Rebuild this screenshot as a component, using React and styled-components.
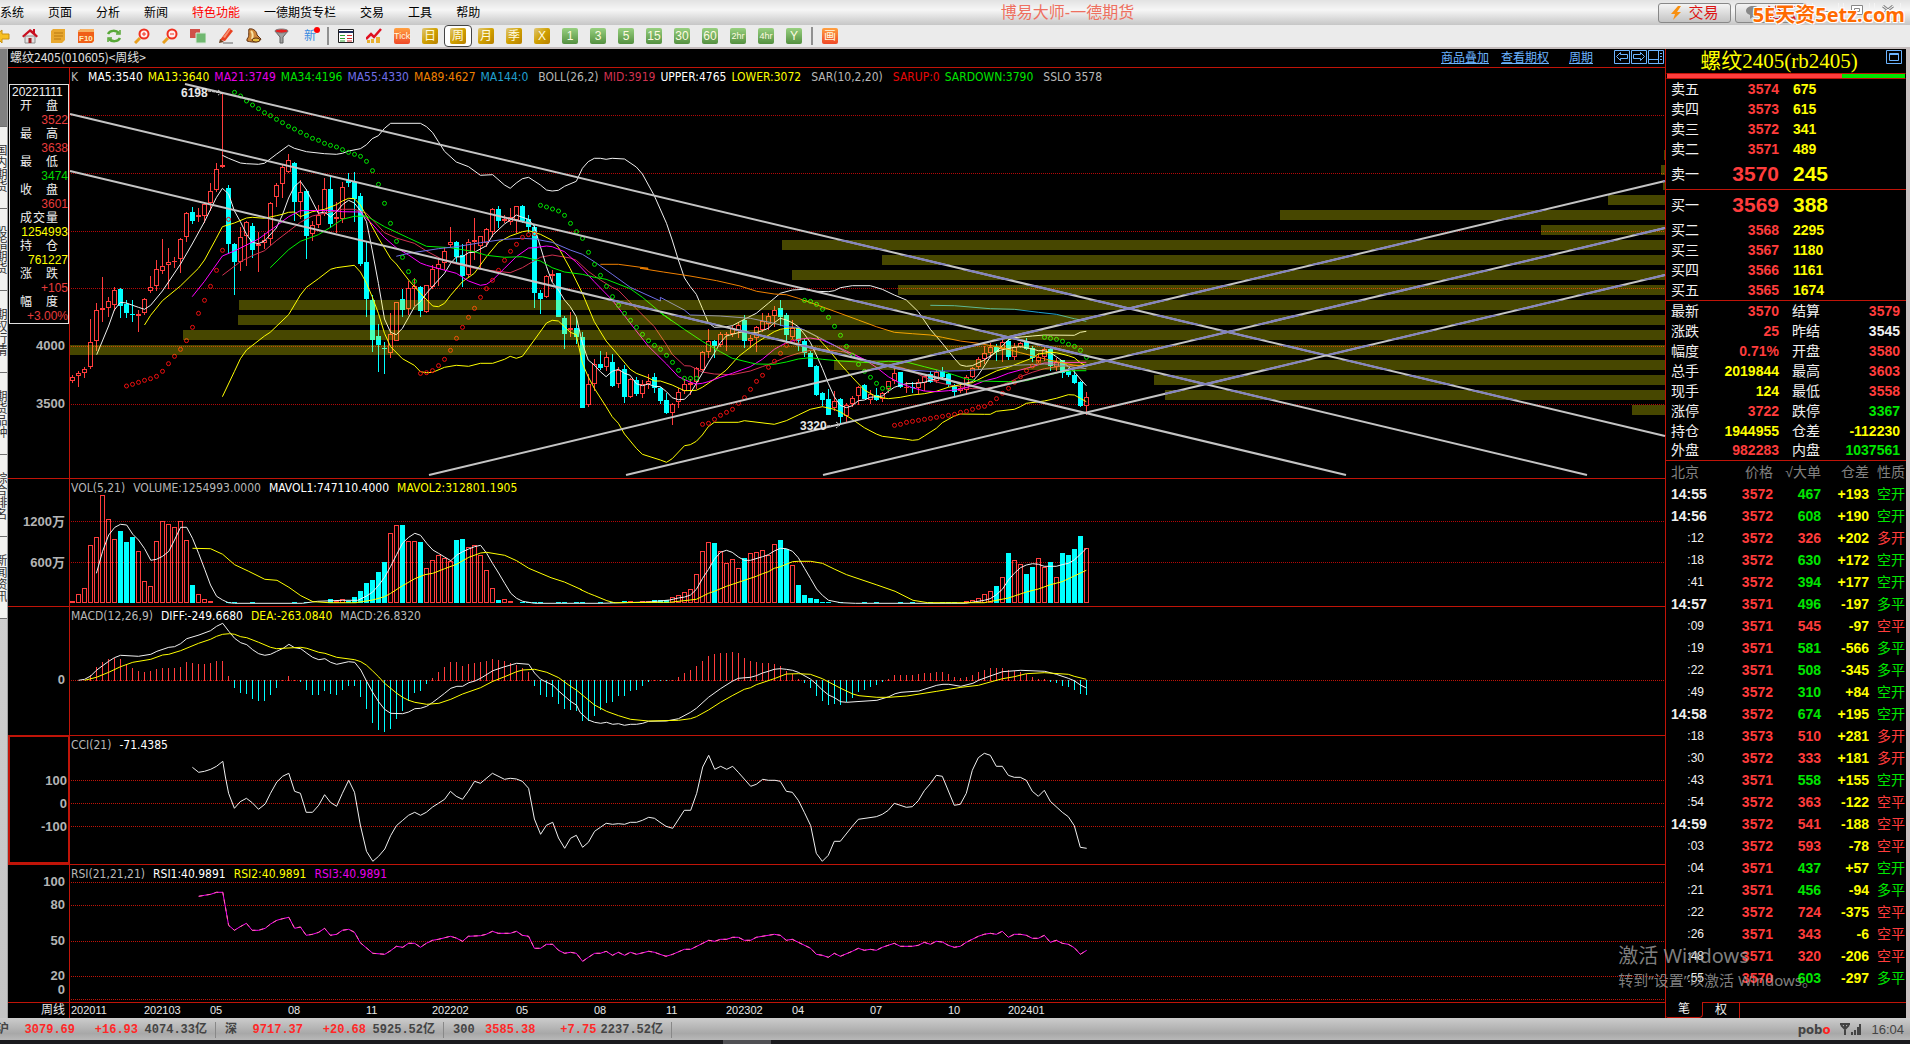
import React from "react";
import styled, { createGlobalStyle } from "styled-components";

const RED = "#ff3c3c";
const CYAN = "#00ffff";
const YELLOW = "#ffff00";
const GREEN = "#00e600";
const LINE = "#c01408";

const GlobalStyle = createGlobalStyle`
  * {
    box-sizing: border-box;
  }
  body {
    margin: 0;
    background-color: black;
    overflow: hidden;
    font-family: "Liberation Sans", "Noto Sans CJK SC", sans-serif;
    font-size: 12px;
  }
  button {
    font: inherit;
    padding: 0;
    border: none;
    background: none;
  }
`;

const Page = styled.div`
  position: relative;
  min-height: 100vh;
  display: flex;
  flex-direction: column;
  overflow: hidden;
`;

/* ---------- menu ---------- */

const MenuBar = styled.header`
  height: 25px;
  display: flex;
  align-items: center;
  justify-content: space-between;
  background: linear-gradient(#e2e2e2, #f6f6f6 40%, #c6c6c6);
`;

const MenuList = styled.nav`
  flex: 1;
  display: flex;
  gap: 24px;
`;

const MenuItem = styled.button`
  color: ${({ hot }) => (hot ? "#ff0000" : "#000000")};
  white-space: nowrap;
  line-height: 16px;
`;

const AppTitle = styled.h1`
  margin: 0;
  padding-left: 234px;
  font-size: 16px;
  line-height: 20px;
  font-weight: normal;
  color: #ee7060;
  white-space: nowrap;
`;

const MenuTools = styled.div`
  flex: 1;
  display: flex;
  justify-content: flex-end;
  gap: 4px;
  padding-right: 9px;
`;

const PillButton = styled.button`
  width: 73px;
  height: 20px;
  display: flex;
  align-items: center;
  justify-content: center;
  gap: 6px;
  border: 1px solid #888888;
  border-radius: 3px;
  background: linear-gradient(#f4f4f4, #c4c4c4);
  color: #dc1414;
  font-size: 15px;
  line-height: 16px;
`;

const WindowButton = styled.button`
  width: 27px;
  height: 18px;
  border: 1px solid #f4f4f4;
  border-top: none;
`;

const SiteMark = styled.div`
  position: absolute;
  top: 1px;
  right: 5px;
  font-family: "Open Sans", "Noto Sans CJK SC", sans-serif;
  font-weight: bold;
  font-size: 20px;
  line-height: 27px;
  color: #ff6a00;
  text-shadow: 1px 1px 0 white, -1px -1px 0 white, 1px -1px 0 white,
    -1px 1px 0 white;
`;

/* ---------- toolbar ---------- */

const Toolbar = styled.div`
  height: 24px;
  display: flex;
  margin-left: -12px;
  background-color: #ebebeb;
  border-bottom: 2px solid #c4bcbc;
`;

const ToolButton = styled.button`
  width: 28px;
  height: 22px;
  display: flex;
  align-items: center;
  justify-content: center;
  ${({ active }) =>
    active &&
    `
    background-color: white;
    border: 1px solid #444444;
    border-radius: 4px;
  `}
`;

const Divider = styled.span`
  width: 2px;
  height: 18px;
  margin: 2px 3px;
  background-color: #909090;
`;

const tileColors = {
  gold: "linear-gradient(135deg, #e0c878, #d0a000 50%, #b88000)",
  green: "linear-gradient(#98d080, #549040)",
  red: "linear-gradient(#ffa040, #f04828)"
};

const Tile = styled.span`
  width: 16px;
  height: 16px;
  border-radius: 2px;
  background: ${({ tone }) => tileColors[tone]};
  color: #fffbe0;
  font-size: ${({ small }) => (small ? "9px" : "12px")};
  line-height: 16px;
  text-align: center;
`;

const NewsMark = styled.span`
  position: relative;
  color: #3c8ce0;
  line-height: 16px;

  &::after {
    content: "";
    position: absolute;
    top: -1px;
    right: -4px;
    width: 6px;
    height: 6px;
    border-radius: 3px;
    background-color: #ff0000;
  }
`;

/* ---------- body ---------- */

const Body = styled.div`
  flex: 1;
  display: flex;
  border-right: 4px solid #c8c0c0;
`;

const SideTabs = styled.aside`
  width: 8px;
  overflow: hidden;
  background: linear-gradient(#dcdcdc, #c4c4c4);
  border-right: 1px solid #a0a0a0;
`;

const SideTab = styled.button`
  display: block;
  width: 7px;
  height: ${({ active }) => (active ? "78px" : "82px")};
  overflow: hidden;
  writing-mode: vertical-rl;
  background-color: ${({ active }) => (active ? "#808080" : "#f2f2f0")};
  border-bottom: 1px solid #707070;
  color: #333333;
  line-height: 14px;
`;

const Charts = styled.main`
  flex: 1;
  min-width: 0;
  border-right: 1px solid ${LINE};
`;

const ChartTitle = styled.div`
  height: 19px;
  display: flex;
  align-items: center;
  padding: 0 0 2px 2px;
  border-bottom: 1px solid ${LINE};
  color: #e0e0e0;
  font-family: "Noto Sans CJK SC", sans-serif;
  line-height: 16px;
`;

const ChartLinks = styled.nav`
  margin-left: auto;
  display: flex;
  align-items: center;

  a {
    color: #6cb4ff;
    margin-right: 12px;
  }
  a:last-of-type {
    margin: 0 21px 0 8px;
  }
  svg {
    margin-right: 1px;
  }
`;

const Panel = styled.section`
  display: flex;
  border-bottom: 1px solid ${LINE};
`;

const Gutter = styled.div`
  width: 62px;
  border-right: 1px solid ${LINE};
  ${({ focused }) =>
    focused &&
    `
    border: 2px solid ${LINE};
    border-top-width: 1px;
  `}

  svg {
    display: block;
    overflow: visible;
  }
`;

const Plot = styled.div`
  flex: 1;
  min-width: 0;

  svg {
    display: block;
    width: 100%;
    overflow: visible;
  }
`;

const Legend = styled.div`
  height: 17px;
  padding: 2px 0 0 1px;
  display: flex;
  gap: ${({ loose }) => (loose ? "8px" : "5px")};
  font-family: "DejaVu Sans Condensed", "DejaVu Sans", sans-serif;
  font-size: 12px;
  line-height: 15px;
  white-space: nowrap;
`;

const LegendItem = styled.span`
  color: ${({ tint }) => tint};
  padding-left: ${({ lead }) => (lead ? "5px" : "0")};
`;

const DataBox = styled.dl`
  width: 60px;
  margin: 16px 0 0 1px;
  border: 1px solid #e0e0e0;
  line-height: 14px;
  color: #f0f0f0;

  dt {
    display: flex;
    justify-content: space-between;
    width: 38px;
    height: 14px;
    margin: 0 auto;
  }
  dd {
    height: 14px;
    margin: 0;
    text-align: right;
  }
`;

const DataDate = styled.div`
  height: 14px;
  padding-left: 2px;
`;

const DataValue = styled.dd`
  color: ${({ tint }) => tint};
`;

const AxisRow = styled.div`
  display: flex;
  height: 15px;
  color: #e8e8e8;
`;

const AxisName = styled.div`
  width: 62px;
  padding-right: 4px;
  border-right: 1px solid ${LINE};
  text-align: right;
  line-height: 14px;
`;

/* ---------- quote ---------- */

const Quote = styled.aside`
  width: 240px;
  font-size: 14px;
  color: #f0f0f0;
  display: flex;
  flex-direction: column;
`;

const QuoteHead = styled.div`
  height: 24px;
  display: grid;
  grid-template-columns: 6px 1fr 20px;
  align-items: center;

  svg {
    align-self: start;
    margin-top: 1px;
  }
`;

const QuoteName = styled.h2`
  margin: 0;
  grid-column: 2;
  color: ${YELLOW};
  font-family: "Liberation Serif", "Noto Sans CJK SC", serif;
  font-size: 21px;
  font-weight: normal;
  line-height: 24px;
  text-align: center;
  white-space: nowrap;
`;

const RatioBar = styled.div`
  height: 6px;
  display: flex;
  border: 1px solid ${LINE};
  border-left-color: black;
  border-right-color: black;
`;

const RatioPart = styled.span`
  flex: ${({ share }) => share};
  background-color: ${({ tint }) => tint};
`;

const Book = styled.table`
  width: 100%;
  border-collapse: collapse;
  table-layout: fixed;
  border-bottom: 1px solid ${LINE};

  th {
    width: 34px;
    padding: 0 0 0 5px;
    font-weight: normal;
    text-align: left;
    white-space: nowrap;
  }
  td {
    padding: 0;
    font-weight: bold;
  }
`;

const BookRow = styled.tr`
  height: ${({ big }) => (big ? "30px" : "20px")};
  line-height: 20px;

  td {
    font-size: ${({ big }) => (big ? "21px" : "14px")};
    color: ${YELLOW};
    padding-left: 14px;
  }
  td:first-of-type {
    width: 79px;
    color: ${RED};
    text-align: right;
    padding-left: 0;
  }
`;

const Facts = styled.table`
  width: 100%;
  border-collapse: collapse;
  table-layout: fixed;
  border-bottom: 1px solid ${LINE};

  tr {
    height: 20px;
    line-height: 18px;
  }
  th {
    width: 34px;
    padding: 0 0 0 5px;
    font-weight: normal;
    text-align: left;
    white-space: nowrap;
  }
  th:nth-of-type(2) {
    width: 48px;
    padding-left: 13px;
  }
`;

const FactValue = styled.td`
  width: ${({ last }) => (last ? "auto" : "79px")};
  padding: ${({ last }) => (last ? "0 6px 0 0" : "0")};
  color: ${({ tint }) => tint};
  font-weight: bold;
  text-align: right;
`;

const Ticks = styled.table`
  width: 100%;
  border-collapse: collapse;
  table-layout: fixed;

  tr {
    height: 22px;
    line-height: 20px;
  }
  th,
  td {
    padding: 0;
    text-align: right;
    white-space: nowrap;
  }
  th {
    color: #808080;
    font-weight: normal;
  }
  td {
    font-weight: bold;
  }
  th:first-child {
    text-align: left;
    padding-left: 5px;
  }
  th:last-child,
  td:last-child {
    font-weight: normal;
    padding-right: 1px;
  }
`;

const TimeCell = styled.td`
  && {
    text-align: ${({ second }) => (second ? "right" : "left")};
    padding: 0 1px 0 5px;
    font-weight: ${({ second }) => (second ? "normal" : "bold")};
    font-size: ${({ second }) => (second ? "12px" : "14px")};
  }
`;

const TintCell = styled.td`
  color: ${({ tint }) => tint};
`;

const QuoteTabs = styled.div`
  height: 16px;
  margin-top: auto;
  display: flex;
  border-top: 1px solid ${LINE};
  font-size: 12px;
`;

const QuoteTab = styled.button`
  width: 37px;
  height: 16px;
  margin-top: -1px;
  color: #f0f0f0;
  line-height: 15px;
  border-right: 1px solid ${LINE};
  ${({ active }) =>
    active &&
    `
    background-color: black;
    border-bottom: 1px solid ${LINE};
    border-radius: 0 0 4px 2px;
  `}
`;

/* ---------- status ---------- */

const StatusBar = styled.footer`
  height: 22px;
  display: flex;
  align-items: center;
  padding-top: 1px;
  background: linear-gradient(#cccccc, #a8a8a8 70%, #b8b8b8);
  color: #444444;
  font-family: "Liberation Mono", "Noto Sans CJK SC", monospace;
  font-weight: bold;
  line-height: 16px;
`;

const IndexGroup = styled.div`
  width: 228px;
  display: flex;
  justify-content: flex-end;
  white-space: nowrap;
  border-right: 1px solid #888888;
  padding-right: 8px;

  &:first-child {
    margin-left: -12px;
  }
`;

const IndexName = styled.span`
  flex: 1;
  padding-left: 9px;
`;

const IndexValue = styled.span`
  width: ${({ wide }) => (wide ? "69px" : "63px")};
  color: ${({ wide }) => (wide ? "#444444" : "#ff2828")};
  text-align: right;
`;

const StatusRight = styled.div`
  margin-left: auto;
  padding-right: 6px;
  display: flex;
  align-items: center;
  gap: 10px;
  font-family: "DejaVu Sans Condensed", "DejaVu Sans", sans-serif;
  font-size: 13px;

  em {
    font-style: normal;
    color: #ff2020;
  }
  time {
    font-family: "Liberation Sans", sans-serif;
    font-weight: normal;
    font-size: 13px;
  }
`;

const Taskbar = styled.div`
  height: 4px;
  padding-left: 723px;
  background-color: #1a1a1e;

  &::after {
    content: "";
    display: block;
    width: 48px;
    height: 4px;
    background-color: #505054;
  }
`;

const Activate = styled.div`
  position: absolute;
  right: 93px;
  bottom: 54px;
  color: rgba(170, 170, 170, 0.75);
  font-family: "Noto Sans", "Noto Sans CJK SC", sans-serif;
  font-size: 15px;
  line-height: 20px;
  white-space: nowrap;

  p {
    margin: 0;
  }
  p:first-child {
    font-size: 20px;
    line-height: 28px;
  }
`;

/* ---------- chart data ---------- */

// body top, body bottom, high, low, r = up / c = down; three units per pixel
const candlesA = `890 904 886 908 r,878 889 872 920 r,866 878 862 893 r,787 862 718 866 r,691 784 670 812 r,
684 691 592 727 r,664 683 650 712 r,630 676 620 693 r,628 678 624 714 c,672 698 660 714 c,701 706 660 725 c,
702 707 690 755 r,658 699 655 705 r,620 632 589 640 r,566 619 540 632 r,559 574 478 583 r,547 555 504 627 r,
543 547 530 565 r,476 537 473 578 r,400 472 396 487 r,396 422 380 432 c,406 411 384 427 r,371 409 367 428 r,
332 370 308 393 r,268 331 250 337 r,254 262 40 265 r,324 491 316 521 c,492 545 488 645 c,472 547 440 574 r,
427 467 422 557 r,438 509 428 533 c,493 497 455 575 r,480 489 460 508 r,370 477 365 494 r,316 350 308 382 r,
262 311 256 353 r,241 275 222 280 r,249 365 247 423 c,336 365 300 416 r,332 468 328 537 c,436 463 424 483 r,
404 434 375 445 r,328 401 295 408 r,328 432 292 443 c,412 418 366 460 r,322 418 305 430 r,301 309 280 320 c,
306 356 277 425 c,348 551 338 557 c,546 657 485 710 c,660 779 645 816 c,768 794 733 876 c,803 808 787 882 c,
763 820 700 834 r,667 782 667 782 r,657 690 627 710 c,625 688 602 704 r,619 628 593 678 r,621 692 618 710 c,
616 695 616 700 r,568 620 556 628 r,553 566 537 617 r,512 549 500 570 r,487 496 441 500 r,487 531 483 546 c,
525 588 492 622 c,487 586 477 590 r,481 486 415 541 r,468 497 468 567 r,448 489 445 500 r,388 457 385 470 r,
388 423 377 445 c,416 424 406 430 r,410 425 385 435 r,379 420 377 460 r,378 422 374 430 c,418 442 405 460 c,
441 638 435 684 c,640 657 630 702 c,589 652 586 655 r,583 587 570 605 r,580 710 578 712 c,714 761 708 806 c,
745 750 697 770 r,745 772 712 792 c,771 983 757 985 c,913 976 882 980 r,853 913 838 932 r,853 863 813 870 c,
832 861 816 872 r,846 917 823 920 c,870 912 862 925 r,867 950 856 968 c,898 952 893 955 r,900 942 892 948 c,
912 943 900 955 r,903 913 882 928 r,890 923 880 940 c,923 962 920 972 c,960 998 940 1002 c,972 1000 968 1035 r,
937 965 925 983 r,913 934 900 942 r,910 914 898 945 r`;
const candlesB = `565 607 560 627 r,517 570 513 573 r,482 517 447 535 r,484 499 480 535 c,463 496 456 502 r,462 466 456 513 r,
444 463 437 470 r,436 452 428 475 r,419 482 405 503 c,475 482 465 505 r,442 475 438 515 r,422 450 400 455 r,
407 432 400 450 r,391 409 378 442 r,384 411 360 437 c,405 464 400 493 c,443 472 420 478 r,443 482 440 513 c,
484 519 478 531 c,518 561 513 561 c,557 645 555 648 c,639 659 636 678 c,657 704 627 706 c,662 683 633 692 r,
656 711 653 736 c,676 709 670 725 r,653 672 648 680 r,620 648 617 676 r,616 657 613 658 c,643 661 630 672 r,
645 660 624 662 c,640 658 635 666 r,604 628 602 640 r,580 602 562 612 r,576 622 576 625 c,620 622 607 640 r,
622 625 605 640 c,605 625 597 642 r,589 610 587 632 r,583 605 573 610 c,576 604 570 610 r,573 590 561 596 c,
583 615 580 620 c,615 636 612 650 c,625 632 612 640 r,592 631 585 645 r,563 592 560 595 r,536 560 530 570 r,
520 537 497 553 r,502 519 490 535 r,500 517 493 543 c,485 508 478 546 r,484 530 478 540 c,500 530 490 540 r,
490 500 487 505 r,485 506 475 510 c,503 535 498 545 c,530 544 520 550 r,508 530 502 543 r,508 558 505 572 c,
545 562 535 574 r,541 578 540 593 c,572 586 565 592 c,584 609 571 612 c,606 678 604 681 c,650 677 636 705 r`;

function readCandles(text, offset) {
  return text.split(",").map(row => {
    const [top, bottom, high, low, side] = row.trim().split(" ");
    return {
      top: Math.round(top / 3) + offset,
      bottom: Math.round(bottom / 3) + offset,
      high: Math.round(high / 3) + offset,
      low: Math.round(low / 3) + offset,
      up: side === "r"
    };
  });
}

const candles = [...readCandles(candlesA, -5), ...readCandles(candlesB, 95)];

// every series comes in two halves, each with its own origin and x scale
function trace(dx, sx, dy, text) {
  return text
    .trim()
    .split(/\s+/)
    .map(p => {
      const [x, y] = p.split(",");
      return `${(x / sx + dx).toFixed(1)},${(y / 3 + dy).toFixed(1)}`;
    })
    .join(" ");
}

const main = (a, b) =>
  [a && trace(-10, 2.45, -5, a), b && trace(570, 3, 95, b)].filter(Boolean).join(" ");
const lower = (dy, a, b) =>
  trace(-70, 2.6133, dy, a) + " " + trace(510, 2.9037, dy, b);
const osc = (dy, a, b) => trace(-70, 2.24, dy, a) + " " + trace(590, 3, dy, b);

const mainLines = [
  ["#d23250", main(
    "398,586 442,545 471,527 501,512 530,482 560,454 589,427 618,408 663,396 692,388 721,388 751,400 795,458 824,474 868,490 898,513 942,542 971,552 1015,565 1045,570 1103,578 1133,563 1148,552 1177,532 1206,525 1250,534 1265,541 1294,574 1324,600 1353,622 1368,631 1412,686 1456,740 1486,794 1500,823 1530,857",
    "151,558 187,576 223,582 277,584 331,573 367,560 403,547 439,531 475,520 511,511 547,508 601,514 637,520 673,540 709,549 745,558 781,562 817,573 853,592 889,606 925,614 961,620 997,626 1033,626 1069,620 1105,608 1141,590 1177,577 1213,566 1267,558 1339,556")],
  ["#f0f0f0", main(
    "398,226 413,235 442,249 457,251 486,253 501,250 530,223 560,196 574,205 604,215 648,221 677,223 692,220 707,213 736,206 751,194 765,176 780,167 795,145 810,130 883,130 898,140 913,158 927,185 942,214 971,246 1001,260 1030,286 1060,284 1089,315 1103,325 1118,309 1133,296 1148,292 1177,315 1192,330 1206,333 1221,331 1236,319 1265,304 1280,265 1294,245 1309,235 1324,235 1338,238 1353,235 1383,237 1412,261 1427,282 1456,347 1486,430 1500,480 1515,540 1530,594",
    "151,320 169,343 187,385 205,428 223,442 259,440 277,437 313,418 349,400 385,370 421,340 457,330 493,328 529,334 565,335 583,332 601,323 637,317 691,317 727,328 763,345 799,360 835,395 871,448 907,490 943,535 961,555 979,559 997,557 1033,540 1069,515 1105,480 1123,473 1177,468 1213,465 1303,466 1321,457 1339,454")],
  [YELLOW, main(
    "398,950 427,875 442,836 457,810 501,768 515,757 560,704 589,645 604,622 633,596 663,568 677,563 721,556 736,576 751,610 765,650 780,700 795,760 810,800 839,836 868,856 883,875 898,878 913,877 942,862 971,856 1001,859 1030,850 1060,850 1089,838 1103,829 1118,835 1133,829 1162,780 1192,729 1206,721 1221,723 1236,740 1250,757 1265,764 1280,850 1294,890 1309,925 1338,980 1353,1010 1368,1030 1383,1062 1412,1105 1427,1123 1471,1140 1486,1147 1500,1136 1530,1097",
    "151,794 169,784 187,765 205,740 223,727 295,727 313,722 403,733 439,722 475,705 511,688 547,680 583,688 601,696 637,718 673,743 709,762 727,769 799,778 817,781 835,779 853,768 889,745 907,728 943,708 961,702 1033,703 1051,703 1069,694 1123,688 1141,680 1159,670 1213,663 1249,655 1285,644 1303,645 1321,655 1339,665")],
  ["#f0f0f0", main(
    "90,824 119,738 133,690 148,667 163,669 178,676 192,682 207,688 222,676 251,633 295,553 324,492 354,425 383,353 398,325 413,342 427,392 442,425 457,463 471,487 486,491 501,483 530,444 545,405 560,354 574,320 589,304 604,330 633,400 648,396 663,411 677,396 692,374 707,361 721,369 736,392 751,425 765,510 780,610 795,717 810,757 824,764 839,745 854,712 868,681 883,665 898,640 913,619 942,580 957,550 971,531 986,530 1001,518 1015,517 1045,497 1060,465 1089,432 1103,420 1118,405 1133,412 1148,418 1162,440 1177,500 1192,560 1206,607 1221,630 1236,660 1250,680 1265,710 1280,790 1294,840 1309,855 1324,875 1338,890 1353,874 1368,868 1383,880 1397,886 1412,911 1427,917 1441,912 1456,919 1471,920 1486,935 1500,953 1515,959 1530,958",
    "151,640 169,610 187,580 205,548 223,520 241,488 259,468 277,463 295,458 313,455 331,459 349,458 367,452 385,445 403,428 421,415 439,420 457,428 475,440 493,462 511,487 529,525 547,565 565,610 583,650 601,676 619,683 637,677 655,662 673,660 691,652 709,650 727,648 745,634 763,622 781,616 799,611 835,610 853,607 871,601 889,596 907,593 925,598 943,606 961,612 979,609 997,605 1015,585 1033,558 1051,530 1069,515 1087,509 1123,502 1141,500 1159,503 1177,507 1195,512 1213,512 1231,518 1249,530 1267,543 1285,560 1303,575 1321,597 1339,617")],
  [YELLOW, main(
    "207,735 222,706 251,662 295,618 339,565 354,540 383,475 398,440 427,429 457,414 471,412 501,415 530,407 545,403 560,397 574,396 589,410 618,395 648,388 677,374 692,363 707,355 721,356 736,375 751,408 765,440 780,474 810,535 824,552 854,600 883,640 913,678 927,680 942,670 957,646 986,605 1015,580 1045,530 1074,487 1103,468 1133,455 1148,452 1177,463 1206,481 1221,502 1250,566 1280,640 1309,725 1338,783 1368,826 1397,868 1412,880 1441,893 1456,903 1471,903 1500,915 1530,932",
    "169,631 187,622 223,598 259,570 295,530 313,516 349,488 367,477 403,455 421,448 457,443 475,445 493,450 529,469 565,508 601,552 637,592 673,630 709,650 745,656 781,652 817,645 853,641 889,634 925,622 961,614 997,608 1033,590 1069,573 1105,562 1141,548 1177,534 1195,522 1231,517 1249,518 1285,527 1303,533 1321,548 1339,558")],
  ["#ff00ff", main(
    "324,650 354,604 398,528 427,513 457,495 486,477 530,438 560,410 589,392 663,391 692,395 736,396 765,432 795,473 824,503 854,525 883,549 898,556 971,580 1001,603 1030,616 1045,613 1060,600 1089,565 1118,530 1148,504 1162,503 1192,498 1206,500 1236,515 1265,547 1309,605 1353,660 1383,707 1412,753 1441,798 1486,852 1515,890 1545,907",
    "169,612 187,610 205,605 241,592 277,580 331,560 367,538 403,508 439,488 475,478 511,474 547,480 565,488 619,513 673,538 709,562 745,590 781,610 817,623 853,633 889,635 925,632 961,628 997,617 1033,603 1069,594 1105,580 1141,570 1177,560 1213,549 1267,548 1339,547")],
  ["#00f000", main(
    "515,563 560,509 589,484 633,464 663,442 692,418 721,409 751,408 795,440 854,474 898,499 957,503 1015,515 1045,526 1089,532 1133,530 1177,543 1206,563 1236,576 1280,583 1309,592 1338,598 1397,626 1427,652 1471,697 1500,723",
    "61,398 133,448 187,484 241,515 277,535 331,548 349,552 403,553 439,546 475,537 511,533 547,538 601,543 691,548 745,544 799,546 853,560 907,574 943,585 979,597 1015,603 1105,605 1159,602 1213,588 1267,575 1303,572 1339,572")],
  ["#7070e8", main(
    "824,529 854,520 927,506 971,500 1030,488 1089,478 1133,475 1162,477 1206,487 1250,510 1280,523 1309,545 1353,583 1397,622 1471,663",
    "61,352 133,390 151,405 241,408 331,415 403,430 439,440 475,442 529,468 583,496 637,528 691,545 745,558 799,570 871,574 979,572 1069,564 1123,556 1213,552 1267,556 1303,562 1339,566")],
  ["#f08000", main(
    "1324,553 1368,553 1441,565",
    "0,265 70,276 150,288 230,302 300,318 350,334 403,342 439,344 475,355 529,374 600,400 655,420 709,440 763,457 817,461 871,465 907,472 961,483 1015,490 1087,503 1141,518 1195,532 1249,545 1300,555 1339,560")],
  ["#20a0d0", main(null,
    "871,376 943,377 1051,386 1123,388 1195,397 1249,403 1303,416 1339,424")]
];

// first bar, offset, colour, values
const sarRuns = [
  [27, -85, "#00e600", [277, 288, 303, 315, 326, 338, 347, 358, 368, 379, 387, 397, 406, 415, 421, 430, 436, 441, 449, 457, 463, 469, 484, 512, 553, 610, 670, 724, 772, 815, 844]],
  [9, -5, "#f01010", [918, 913, 907, 901, 896, 889, 874, 851, 829, 808, 782, 742, 700, 661, 619, 571, 511, 418]],
  [58, -5, "#f01010", [880, 878, 872, 857, 838, 811, 775, 742, 712, 685, 652, 626, 601, 571, 541, 514, 493, 472, 464, 461]],
  [78, -5, "#00e600", [376, 381, 387, 393, 406, 430, 455, 475, 517, 553, 586, 619, 650, 676, 700, 721, 742, 763, 782, 796, 808, 826, 847, 871, 895, 895, 895]],
  [105, 95, "#f01010", [733, 730, 718, 706, 697, 688, 670, 653, 628, 604, 586, 562, 544, 520, 496, 484, 484]],
  [122, 95, "#00e600", [361, 364, 373, 388, 412, 439, 466, 499, 526, 553, 574, 592, 610, 625, 625]],
  [137, 95, "#f01010", [736, 733, 727, 724, 721, 718, 715, 712, 709, 706, 703, 697, 694, 688, 682, 679, 670, 656, 640, 625, 607, 590, 572, 558, 547]],
  [162, 95, "#00e600", [472, 475, 478, 484, 493, 499, 511, 532]]
];

// left edges, one bar every 15px
const profile = [1594, 1591, 1593, 1538, 1210, 1471, 712, 812, 722, 828, 169, 168, 113, 0, 764, 1084, 1095, 1562];

const trends = [
  [115, -1, 1595, 351],
  [0, 29, 1517, 390],
  [0, 86, 1276, 390],
  [359, 390, 1595, 96],
  [556, 390, 1595, 143],
  [753, 390, 1595, 190]
];

const flat = n => Array(n).fill(396);

const volumes = [
  393, 373, 355, 226, 202, 76, 148, 208, 183, 217, 202, 244, 334, 349, 214, 154, 163, 172, 154, 211, 346, 373, 388, 393,
  ...flat(19), 387, 394, 388, 393, 381, 363, 339, 330, 306, 276, 190, 166, 165, 213, 213, 216, 295, 271, 256, 264, 274,
  210, 207, 231, 226, 256, 300, 355, 390, 388, 393, ...flat(18), 394, 393, 396, 393, 393, 390, 390, 390, 381, 376, 366, 358, 313, 243, 217, 219, 243,
  280, 268, 295, 264, 249, 246, 240, 256, 223, 210, 237, 286, 345, 375, 384, 387, ...flat(24), 393, 390, 384, 373,
  363, 348, 321, 249, 271, 283, 312, 291, 265, 291, 276, 322, 249, 255, 237, 198, 234
];

const volLines = [
  ["#f0f0f0", lower(-26,
    "252,310 268,244 284,195 300,172 315,163 331,165 347,193 362,210 378,236 394,271 409,268 425,259 441,244 456,210 472,172 488,172 503,205 519,250 535,298 550,345 566,379 582,390 597,398 613,400 790,400 830,394 895,391 935,391 958,378 974,366 990,345 1005,322 1021,289 1037,253 1052,219 1068,202 1084,190 1099,196 1115,220 1131,240 1146,250 1162,261 1178,272 1193,256 1209,245 1225,237 1240,230 1256,226 1272,250 1287,280 1303,309 1319,340 1335,370 1350,385 1366,394 1397,400",
    "60,400 200,396 260,390 286,384 304,381 321,375 338,358 356,325 373,298 390,268 408,247 425,241 442,247 460,261 477,271 495,271 530,260 547,254 564,243 582,235 599,236 617,244 634,263 652,295 669,325 687,357 704,376 722,391 757,398 800,400 1120,400 1174,391 1191,386 1209,374 1227,357 1244,330 1261,310 1279,293 1296,285 1314,281 1331,283 1348,289 1383,289 1400,284 1418,280 1435,270 1453,253 1470,235")],
  [YELLOW, lower(-26,
    "503,235 550,236 582,253 613,284 650,304 692,328 724,331 755,352 786,377 818,395 860,398 930,398 974,390 1005,380 1021,370 1052,347 1084,326 1110,314 1131,310 1162,296 1193,283 1225,262 1256,249 1272,247 1319,256 1350,272 1382,295 1440,323 1475,336 1520,359",
    "0,358 25,370 43,377 78,392 100,398 260,397 338,388 373,370 390,364 425,349 512,319 530,311 547,305 564,295 582,290 617,275 634,274 670,274 704,280 740,298 774,314 860,344 915,364 967,391 1010,398 1174,398 1244,384 1296,366 1331,357 1366,344 1400,335 1435,318 1470,301")]
];

// starts at the fourth bar, 631 is the zero line
const macdBars = [
  616, 592, 576, 568, 564, 568, 585, 595, 604, 606, 604, 598, 595, 595, 594, 592, 577, 580, 582, 582, 580, 574, 574, 618,
  654, 669, 672, 687, 693, 693, 675, 654, 630, 618, 631, 635, 659, 675, 675, 663, 672, 675, 659, 648, 648, 681, 717, 759,
  780, 786, 777, 747, 723, 693, 669, 663, 642, 624, 606, 592, 577, 577, 588, 582, 580, 577, 574, 568, 571, 574, 580, 585,
  595, 606, 648, 675, 681, 681, 702, 717, 720, 723, 753, 752, 738, 720, 699, 696, 678, 678, 663, 660, 648, 636, 629, 634,
  634, 629, 621, 609, 600, 588, 573, 558, 552, 549, 549, 546, 549, 564, 573, 576, 579, 579, 582, 588, 603, 612, 627, 639,
  654, 678, 693, 705, 702, 705, 696, 684, 666, 660, 651, 645, 636, 627, 615, 615, 615, 615, 612, 609, 609, 606, 606, 612,
  621, 624, 621, 615, 606, 600, 594, 594, 594, 600, 603, 606, 612, 621, 627, 627, 636, 639, 648, 651, 660, 672, 675
];

const macdLines = [
  ["#f0f0f0", lower(-154,
    "205,631 221,628 237,618 252,601 268,587 284,574 299,563 315,556 362,559 394,553 410,544 441,532 456,530 472,521 488,506 520,495 550,482 566,469 582,460 598,484 613,505 629,518 645,524 660,539 676,551 692,556 707,553 723,544 740,535 755,523 770,533 786,536 802,550 817,562 833,569 849,566 864,577 880,583 911,575 927,577 943,600 958,634 974,667 990,696 1005,718 1021,730 1052,731 1068,726 1084,716 1099,715 1115,709 1131,697 1147,683 1162,670 1178,655 1194,649 1209,649 1225,638 1241,633 1256,625 1288,602 1319,590 1350,580 1382,583 1397,609 1413,628 1429,637 1444,645 1460,663 1491,694 1507,706",
    "0,727 25,750 42,757 60,760 77,757 95,763 112,761 129,766 147,763 164,763 182,760 199,754 251,753 286,746 321,727 338,715 373,682 408,656 442,634 460,625 495,622 512,617 530,609 547,604 564,598 582,596 599,598 617,601 634,607 669,627 687,643 704,660 722,675 739,683 757,695 774,697 862,691 897,680 915,671 932,667 984,663 1036,646 1054,643 1071,643 1106,649 1141,640 1157,631 1191,618 1227,605 1280,601 1350,604 1383,613 1418,625 1435,632 1453,645 1470,654")],
  [YELLOW, lower(-154,
    "221,631 252,622 284,607 315,590 347,577 394,568 425,555 441,553 472,542 519,520 550,508 566,499 582,493 600,491 613,493 629,500 645,503 676,517 707,532 723,536 739,535 786,532 802,535 833,547 849,550 880,562 927,569 943,575 958,586 974,603 990,621 1005,640 1037,670 1052,682 1068,691 1084,697 1115,703 1147,700 1178,688 1209,672 1256,653 1288,634 1319,620 1350,605 1366,600 1397,598 1429,607 1460,623 1491,649 1507,661",
    "0,669 42,705 77,724 112,737 147,748 199,753 286,751 321,746 338,740 373,720 408,697 442,677 477,658 495,653 512,644 564,626 599,612 634,611 669,613 704,626 757,655 792,672 810,677 862,682 897,682 949,678 1036,664 1106,652 1157,646 1191,636 1227,626 1261,620 1296,611 1348,608 1418,613 1435,619 1470,628")]
];

const cciLine = osc(-23,
  "431,112 445,127 458,124 472,118 485,109 499,94 505,141 512,190 525,235 538,215 552,205 565,218 579,238 594,222 606,190 620,156 633,139 647,130 660,184 673,190 686,247 700,247 714,226 727,194 740,217 754,229 767,190 781,151 794,187 807,285 821,364 835,394 848,379 862,357 875,317 888,287 902,271 915,256 929,247 942,256 955,247 969,231 982,220 996,208 1009,184 1022,199 1036,208 1049,184 1063,154 1076,160 1103,130 1130,148 1143,145 1157,147 1170,154 1184,175 1197,267 1211,313 1224,286 1238,277 1251,324 1265,355 1278,325 1291,316 1305,352 1318,337 1332,304 1345,292 1358,280 1372,283 1385,281 1399,283 1412,277 1426,277 1439,271 1453,262 1466,265",
  "0,277 18,289 38,295 73,241 92,241 110,190 128,111 146,76 164,118 182,109 200,118 218,109 235,127 272,169 289,163 308,148 325,151 345,151 361,154 379,184 397,187 415,211 433,247 452,287 469,370 487,394 505,376 523,334 541,334 577,289 595,268 649,260 667,253 685,241 703,220 739,232 757,230 775,212 793,182 811,161 829,136 847,139 883,226 901,223 919,190 937,121 955,83 973,70 991,76 1009,109 1027,109 1045,136 1063,142 1081,142 1099,151 1117,184 1135,199 1153,181 1171,214 1207,247 1225,260 1243,287 1261,352 1280,355");

const rsiLine = osc(-152,
  "445,499 458,496 472,493 485,487 499,487 512,586 525,601 538,590 552,580 565,601 579,601 594,595 606,582 620,571 633,566 647,562 660,595 673,591 686,616 700,613 714,607 727,595 740,616 754,613 767,601 781,598 794,607 807,638 835,670 862,673 875,662 888,649 902,652 915,640 929,640 942,652 955,640 969,631 982,628 1009,619 1022,624 1036,634 1049,619 1076,617 1089,613 1103,604 1116,610 1143,610 1157,604 1170,616 1184,619 1197,655 1211,655 1224,643 1238,643 1251,661 1265,670 1278,667 1291,670 1305,694 1318,682 1332,670 1345,670 1358,664 1372,676 1385,667 1399,676 1412,667 1426,673 1453,664 1466,667",
  "0,673 18,679 38,673 73,658 92,658 128,640 146,631 164,634 182,628 200,628 218,622 235,622 253,631 272,631 289,622 343,613 361,616 379,631 397,628 415,637 452,655 469,673 487,676 505,682 523,670 541,679 577,664 595,655 613,661 631,658 649,661 667,652 703,640 721,649 757,649 775,646 793,637 811,643 829,634 847,636 865,646 883,652 901,649 919,637 955,619 973,613 991,610 1009,613 1027,604 1045,622 1063,613 1081,613 1099,616 1117,625 1135,625 1153,616 1171,637 1189,631 1207,640 1225,643 1243,653 1261,673 1280,661");

const dates = [
  [1, "202011"], [74, "202103"], [140, "05"], [218, "08"], [296, "11"], [362, "202202"], [446, "05"],
  [524, "08"], [596, "11"], [656, "202302"], [722, "04"], [800, "07"], [878, "10"], [938, "202401"]
];

/* ---------- chart parts ---------- */

function Grid({ rows, color = LINE }) {
  return rows.map(y => (
    <line
      key={y}
      x1="1"
      x2="100%"
      y1={y + 0.5}
      y2={y + 0.5}
      stroke={color}
      strokeDasharray="1 1"
      shapeRendering="crispEdges"
    />
  ));
}

function Lines({ lines }) {
  return lines.map(([color, points, dash], i) => (
    <polyline key={i} points={points} fill="none" stroke={color} strokeDasharray={dash} />
  ));
}

function Scale({ height, labels }) {
  return (
    <svg width="60" height={height}>
      {labels.map(([y, text]) => (
        <text key={text} x="57" y={y} textAnchor="end" fill="#b4b4b4" fontSize="13" fontWeight="bold">
          {text}
        </text>
      ))}
    </svg>
  );
}

function Candle({ i, c }) {
  const x = i * 6;
  const color = c.up ? RED : CYAN;
  const height = Math.max(1, c.bottom - c.top);
  return (
    <g shapeRendering="crispEdges">
      <rect x={x + 2} y={c.high} width="1" height={Math.max(0, c.top - c.high)} fill={color} />
      <rect x={x + 2} y={c.bottom} width="1" height={Math.max(0, c.low - c.bottom)} fill={color} />
      {c.up && height > 1 ? (
        <rect x={x + 0.5} y={c.top + 0.5} width="4" height={height - 1} fill="black" stroke={color} />
      ) : (
        <rect x={x} y={c.top} width="5" height={height} fill={color} />
      )}
    </g>
  );
}

function MainChart() {
  const bars = profile.map((x, i) => (
    <rect key={i} x={x} y={65 + i * 15} width={1595 - x} height="10" />
  ));
  const rays = trends.map(([x1, y1, x2, y2]) => (
    <line key={x1 + "/" + y1} x1={x1} y1={y1} x2={x2} y2={y2} />
  ));
  return (
    <svg height="393">
      <defs>
        <clipPath id="profile">{bars}</clipPath>
      </defs>
      <Grid rows={[30, 88, 146, 203, 261, 319]} color="#b40808" />
      {candles.map((c, i) => (
        <Candle key={i} i={i} c={c} />
      ))}
      <Lines lines={mainLines} />
      {sarRuns.map(([start, offset, color, values]) =>
        values.map((v, i) => (
          <circle
            key={start + i}
            cx={(start + i) * 6 + 2.5}
            cy={v / 3 + offset}
            r="2"
            fill="none"
            stroke={color}
          />
        ))
      )}
      <g fill="#ffff00" fillOpacity="0.28">{bars}</g>
      <g stroke="#c4c4c4" strokeWidth="2">{rays}</g>
      <g stroke="#8484c0" strokeWidth="2" clipPath="url(#profile)">{rays}</g>
      <g fill="#e8e8e8" fontSize="12" fontWeight="bold">
        <text x="111" y="12">6198</text>
        <text x="730" y="345">3320</text>
      </g>
      <g stroke="#d0d0d0" strokeDasharray="3 1">
        <path d="M138 6l14 2m-4-3l4 3l-4 2" fill="none" />
        <path d="M757 341l13 -1m-4-3l4 3l-4 3" fill="none" />
      </g>
    </svg>
  );
}

function VolumeChart() {
  return (
    <svg height="110">
      <Grid rows={[25, 66]} color="#b40808" />
      <g shapeRendering="crispEdges">
        {volumes.map((v, i) => {
          const y = Math.round(v / 3) - 26;
          return candles[i].up ? (
            <rect key={i} x={i * 6 + 0.5} y={y + 0.5} width="4" height={Math.max(0, 106 - y)} fill="none" stroke={RED} />
          ) : (
            <rect key={i} x={i * 6} y={y} width="5" height={107 - y} fill={CYAN} />
          );
        })}
      </g>
      <Lines lines={volLines} />
    </svg>
  );
}

function MacdChart() {
  return (
    <svg height="111">
      <Grid rows={[56]} />
      <g shapeRendering="crispEdges">
        {macdBars.map((v, i) => {
          const y = Math.round(v / 3) - 154;
          const up = v <= 631;
          return (
            <rect
              key={i}
              x={(i + 3) * 6 + 2}
              y={up ? y : 56}
              width="1"
              height={up ? 57 - y : Math.max(1, y - 56)}
              fill={up ? RED : CYAN}
            />
          );
        })}
      </g>
      <Lines lines={macdLines} />
    </svg>
  );
}

function ChartPanel({ legend, gutter, focused, loose, children }) {
  return (
    <Panel>
      <Gutter focused={focused}>{gutter}</Gutter>
      <Plot>
        <Legend loose={loose}>
          {legend.map(([text, tint = "#b8b8b8", lead]) => (
            <LegendItem key={text} tint={tint} lead={lead}>{text}</LegendItem>
          ))}
        </Legend>
        {children}
      </Plot>
    </Panel>
  );
}

/* ---------- toolbar icons ---------- */

const icons = {
  back: (
    <path d="M1 8l7-6v4h7v5H8v4z" fill="#f8c020" stroke="#c89010" />
  ),
  home: (
    <>
      <path d="M3 8h10v7H3z" fill="#e0e0e0" stroke="#909090" />
      <path d="M8 1L0 8l1.500 1.500L8 4l6.500 5.500L16 8l-3-3V1h-2v2z" fill="#c81020" />
      <path d="M6.500 10h3v5h-3z" fill="#a02020" />
    </>
  ),
  note: (
    <>
      <path d="M3 1h12v11l-3 3H1V3z" fill="#e8a830" />
      <path d="M4 5h9M4 8h9M4 11h7" stroke="#b87810" />
    </>
  ),
  f10: (
    <>
      <path d="M0 3l3-2h13v12l-2 2H0z" fill="#f06018" />
      <path d="M0 3l3-2h13v3H0z" fill="#f8b060" />
      <text x="1" y="13" fontSize="8" fontWeight="bold" fill="#fff0c0">F10</text>
    </>
  ),
  refresh: (
    <g fill="none" stroke="#58a838" strokeWidth="2.500">
      <path d="M2 6c2-4 8-4 11-1" />
      <path d="M14 10c-2 4-8 4-11 1" />
      <path d="M14 2v4h-4M2 14v-4h4" strokeWidth="1.500" />
    </g>
  ),
  zoomIn: (
    <>
      <circle cx="10" cy="6" r="4.500" fill="#fff0f0" stroke="#f03020" strokeWidth="2" />
      <path d="M10 4v4M8 6h4" stroke="#f03020" />
      <path d="M1 15l5-5" stroke="#e8a020" strokeWidth="3" />
    </>
  ),
  zoomOut: (
    <>
      <circle cx="10" cy="6" r="4.500" fill="#fff0f0" stroke="#f03020" strokeWidth="2" />
      <path d="M8 6h4" stroke="#f03020" />
      <path d="M1 15l5-5" stroke="#e8a020" strokeWidth="3" />
    </>
  ),
  swap: (
    <>
      <path d="M0 1h10v9H0z" fill="#d05048" />
      <path d="M6 5h10v10H6z" fill="#70b870" stroke="#d8e8d8" />
    </>
  ),
  pen: (
    <>
      <path d="M2 12L11 0l4 3-8 10z" fill="#e84020" />
      <path d="M5 9l7-9 1 1-6 9z" fill="#f89070" />
      <path d="M2 11l4 3-5 1z" fill="#704020" />
      <path d="M5 15h10" stroke="#909090" strokeWidth="1.500" />
    </>
  ),
  bell: (
    <>
      <path d="M3 1c5-1 8 3 8 6l4 4c-1 3-7 4-14 2V11C4 8 2 4 3 1z" fill="#d08838" stroke="#603010" />
      <path d="M5 3c2 2 2 5 1 8" fill="none" stroke="#f8e0a0" strokeWidth="2" />
      <ellipse cx="10" cy="12" rx="4" ry="2" fill="#e8c040" stroke="#603010" />
    </>
  ),
  filter: (
    <>
      <path d="M1 3l5 6v6h3V9l5-6z" fill="#a0a0a0" stroke="#606060" />
      <ellipse cx="7.500" cy="3" rx="6.500" ry="2" fill="#e82020" stroke="#808080" />
    </>
  ),
  list: (
    <>
      <path d="M0.500 1.500h15v13H0.500z" fill="white" stroke="#202020" />
      <path d="M1 4h14" stroke="#203060" strokeWidth="2" />
      <path d="M2 7.500h5M2 10.500h5M2 13h5" stroke="#30a030" />
      <path d="M9 7.500h5M9 10.500h5M9 13h5" stroke="#d03030" />
    </>
  ),
  trend: (
    <>
      <path d="M1 15v-3h3v3zM5 15v-4h3v4zM10 15V9h4v6z" fill="#e8b030" />
      <path d="M0 11l5-5 3 3 7-8" fill="none" stroke="#e01020" strokeWidth="2.500" />
    </>
  )
};

function Icon({ name }) {
  return (
    <svg width="16" height="16" viewBox="0 0 16 16" aria-hidden="true">
      {icons[name]}
    </svg>
  );
}

const toolIcons = ["back", "home", "note", "f10", "refresh", "zoomIn", "zoomOut", "swap", "pen", "bell", "filter"];
const periods = [
  ["Tick", "red", true], ["日", "gold"], ["周", "gold"], ["月", "gold"], ["季", "gold"], ["X", "gold"],
  ["1", "green"], ["3", "green"], ["5", "green"], ["15", "green"], ["30", "green"], ["60", "green"],
  ["2hr", "green", true], ["4hr", "green", true], ["Y", "green"]
];

const menus = ["系统", "页面", "分析", "新闻", "特色功能", "一德期货专栏", "交易", "工具", "帮助"];
const sideTabs = ["", "国内期货", "股指期货", "期权行情", "期货品种", "综合排名", "新闻资讯"];

/* ---------- quote data ---------- */

const asks = [["卖五", 3574, 675], ["卖四", 3573, 615], ["卖三", 3572, 341], ["卖二", 3571, 489], ["卖一", 3570, 245]];
const bids = [["买一", 3569, 388], ["买二", 3568, 2295], ["买三", 3567, 1180], ["买四", 3566, 1161], ["买五", 3565, 1674]];

const facts = [
  ["最新", "3570", RED, "结算", "3579", RED],
  ["涨跌", "25", RED, "昨结", "3545", "#f0f0f0"],
  ["幅度", "0.71%", RED, "开盘", "3580", RED],
  ["总手", "2019844", YELLOW, "最高", "3603", RED],
  ["现手", "124", YELLOW, "最低", "3558", RED],
  ["涨停", "3722", RED, "跌停", "3367", GREEN],
  ["持仓", "1944955", YELLOW, "仓差", "-112230", YELLOW],
  ["外盘", "982283", RED, "内盘", "1037561", GREEN]
];

const ticks = [
  ["14:55", 3572, 467, "+193", "空开", 1], ["14:56", 3572, 608, "+190", "空开", 1], [":12", 3572, 326, "+202", "多开", 0],
  [":18", 3572, 630, "+172", "空开", 1], [":41", 3572, 394, "+177", "空开", 1], ["14:57", 3571, 496, "-197", "多平", 1],
  [":09", 3571, 545, "-97", "空平", 0], [":19", 3571, 581, "-566", "多平", 1], [":22", 3571, 508, "-345", "多平", 1],
  [":49", 3572, 310, "+84", "空开", 1], ["14:58", 3572, 674, "+195", "空开", 1], [":18", 3573, 510, "+281", "多开", 0],
  [":30", 3572, 333, "+181", "多开", 0], [":43", 3571, 558, "+155", "空开", 1], [":54", 3572, 363, "-122", "空平", 0],
  ["14:59", 3572, 541, "-188", "空平", 0], [":03", 3572, 593, "-78", "空平", 0], [":04", 3571, 437, "+57", "空开", 1],
  [":21", 3571, 456, "-94", "多平", 1], [":22", 3572, 724, "-375", "空平", 0], [":26", 3571, 343, "-6", "空平", 0],
  [":48", 3571, 320, "-206", "空平", 0], [":55", 3570, 603, "-297", "多平", 1]
];

const boxRows = [
  ["开盘", "3522", "#e83c3c"], ["最高", "3638", "#e83c3c"], ["最低", "3474", "#00d800"], ["收盘", "3601", "#e83c3c"],
  ["成交量", "1254993", YELLOW], ["持仓", "761227", YELLOW], ["涨跌", "+105", "#e83c3c"], ["幅度", "+3.00%", "#e83c3c"]
];

const indexes = [
  ["沪", "3079.69", "+16.93", "4074.33亿"],
  ["深", "9717.37", "+20.68", "5925.52亿"],
  ["300", "3585.38", "+7.75", "2237.52亿"]
];

function BookTable({ rows, best }) {
  return (
    <Book>
      <tbody>
        {rows.map(([name, price, lots]) => (
          <BookRow key={name} big={name === best}>
            <th scope="row">{name}</th>
            <td>{price}</td>
            <td>{lots}</td>
          </BookRow>
        ))}
      </tbody>
    </Book>
  );
}

function QuotePanel() {
  return (
    <Quote>
      <QuoteHead>
        <QuoteName>螺纹2405(rb2405)</QuoteName>
        <svg width="17" height="14" fill="none" stroke="#6cb4ff">
          <path d="M0.500 0.500h15v13h-15zM3.500 3.500h9v7h-9z" />
          <path d="M3 4.500h10" />
        </svg>
      </QuoteHead>
      <RatioBar>
        <RatioPart share={175} tint={RED} />
        <RatioPart share={63} tint={GREEN} />
      </RatioBar>
      <BookTable rows={asks} best="卖一" />
      <BookTable rows={bids} best="买一" />
      <Facts>
        <tbody>
          {facts.map(([a, av, ac, b, bv, bc]) => (
            <tr key={a}>
              <th scope="row">{a}</th>
              <FactValue tint={ac}>{av}</FactValue>
              <th scope="row">{b}</th>
              <FactValue tint={bc} last>{bv}</FactValue>
            </tr>
          ))}
        </tbody>
      </Facts>
      <Ticks>
        <colgroup>
          <col width="39" />
          <col width="68" />
          <col width="48" />
          <col width="48" />
          <col />
        </colgroup>
        <thead>
          <tr>
            <th>北京</th>
            <th>价格</th>
            <th>√大单</th>
            <th>仓差</th>
            <th>性质</th>
          </tr>
        </thead>
        <tbody>
          {ticks.map(([time, price, lots, delta, kind, sell], i) => (
            <tr key={i}>
              <TimeCell second={time.length < 4}>{time}</TimeCell>
              <TintCell tint={RED}>{price}</TintCell>
              <TintCell tint={sell ? GREEN : RED}>{lots}</TintCell>
              <TintCell tint={YELLOW}>{delta}</TintCell>
              <TintCell tint={sell ? GREEN : RED}>{kind}</TintCell>
            </tr>
          ))}
        </tbody>
      </Ticks>
      <QuoteTabs>
        <QuoteTab active>笔</QuoteTab>
        <QuoteTab>权</QuoteTab>
      </QuoteTabs>
    </Quote>
  );
}

export default function App() {
  return (
    <Page>
      <GlobalStyle />
      <MenuBar>
        <MenuList>
          {menus.map(name => (
            <MenuItem key={name} hot={name === "特色功能"}>{name}</MenuItem>
          ))}
        </MenuList>
        <AppTitle>博易大师-一德期货</AppTitle>
        <MenuTools>
          <PillButton>
            <svg width="12" height="14" fill="#f89010"><path d="M8 0L1 8h4L3 14l8-8H7l4-6z" /></svg>
            交易
          </PillButton>
          <PillButton>
            <svg width="14" height="13" fill="#888888"><path d="M7 0c4 0 7 2 7 5s-3 5-6 5l-4 3v-4C2 8 0 7 0 5c0-3 3-5 7-5z" /></svg>
            论坛
          </PillButton>
          <WindowButton aria-label="最小化">
            <svg width="12" height="10" fill="none" stroke="#888888"><path d="M0.500 6.500h11v3h-11z" fill="white" /></svg>
          </WindowButton>
          <WindowButton aria-label="还原">
            <svg width="12" height="10" fill="none" stroke="#888888"><path d="M0.500 0.500h11v9h-11zM3.500 3.500h5v3h-5z" fill="white" /></svg>
          </WindowButton>
          <WindowButton aria-label="关闭">
            <svg width="12" height="10" stroke="#888888" strokeWidth="3"><path d="M1 1l10 8M11 1L1 9" /><path d="M1 1l10 8M11 1L1 9" stroke="white" strokeWidth="1" /></svg>
          </WindowButton>
        </MenuTools>
      </MenuBar>
      <SiteMark>5E天资5etz.com</SiteMark>

      <Toolbar>
        {toolIcons.map(name => (
          <ToolButton key={name} aria-label={name}><Icon name={name} /></ToolButton>
        ))}
        <ToolButton><NewsMark>新</NewsMark></ToolButton>
        <Divider />
        <ToolButton aria-label="list"><Icon name="list" /></ToolButton>
        <ToolButton aria-label="trend"><Icon name="trend" /></ToolButton>
        {periods.map(([name, tone, small]) => (
          <ToolButton key={name} active={name === "周"}>
            <Tile tone={tone} small={small}>{name}</Tile>
          </ToolButton>
        ))}
        <Divider />
        <ToolButton><Tile tone="red">画</Tile></ToolButton>
      </Toolbar>

      <Body>
        <SideTabs>
          {sideTabs.map((name, i) => (
            <SideTab key={i} active={i === 0}>{name}</SideTab>
          ))}
        </SideTabs>

        <Charts>
          <ChartTitle>
            螺纹2405(010605)&lt;周线&gt;
            <ChartLinks>
              <a href="#overlay">商品叠加</a>
              <a href="#options">查看期权</a>
              <a href="#period">周期</a>
              <svg width="16" height="14" fill="none" stroke="#6cb4ff"><path d="M0.500 0.500h15v13h-15zM2.500 6.500l4-4v2h7v4h-7v2z" /></svg>
              <svg width="16" height="14" fill="none" stroke="#6cb4ff"><path d="M0.500 0.500h15v13h-15zM13.500 6.500l-4-4v2h-7v4h7v2z" /></svg>
              <svg width="16" height="14" fill="none" stroke="#6cb4ff"><path d="M0.500 0.500h15v13h-15zM10.500 0v13M0 9.500h10M12 3.500h2M12 6.500h2M12 9.500h2" /></svg>
            </ChartLinks>
          </ChartTitle>

          <ChartPanel
            legend={[
              ["K"], ["MA5:3540", "#ffffff", true], ["MA13:3640", YELLOW], ["MA21:3749", "#e800e8"], ["MA34:4196", "#00e600"],
              ["MA55:4330", "#7070e8"], ["MA89:4627", "#f08000"], ["MA144:0", "#20a0d0"], ["BOLL(26,2)", "#b8b8b8", true],
              ["MID:3919", "#d23250"], ["UPPER:4765", "#ffffff"], ["LOWER:3072", YELLOW], ["SAR(10,2,20)", "#b8b8b8", true],
              ["SARUP:0", "#e80808", true], ["SARDOWN:3790", "#00e600"], ["SSLO 3578", "#b8b8b8", true]
            ]}
            gutter={
              <>
                <DataBox>
                  <DataDate>20221111</DataDate>
                  {boxRows.map(([name, value, tint]) => (
                    <React.Fragment key={name}>
                      <dt>{name.split("").map(ch => <span key={ch}>{ch}</span>)}</dt>
                      <DataValue tint={tint}>{value}</DataValue>
                    </React.Fragment>
                  ))}
                </DataBox>
                <Scale height="100" labels={[[26, "4000"], [84, "3500"]]} />
              </>
            }
          >
            <MainChart />
          </ChartPanel>

          <ChartPanel
            loose
            legend={[["VOL(5,21)"], ["VOLUME:1254993.0000"], ["MAVOL1:747110.4000", "#ffffff"], ["MAVOL2:312801.1905", YELLOW]]}
            gutter={<Scale height="110" labels={[[47, "1200万"], [88, "600万"]]} />}
          >
            <VolumeChart />
          </ChartPanel>

          <ChartPanel
            loose
            legend={[["MACD(12,26,9)"], ["DIFF:-249.6680", "#ffffff"], ["DEA:-263.0840", YELLOW], ["MACD:26.8320"]]}
            gutter={<Scale height="110" labels={[[77, "0"]]} />}
          >
            <MacdChart />
          </ChartPanel>

          <ChartPanel
            focused
            loose
            legend={[["CCI(21)"], ["-71.4385", "#ffffff"]]}
            gutter={<Scale height="110" labels={[[48, "100"], [71, "0"], [94, "-100"]]} />}
          >
            <svg height="111">
              <Grid rows={[27, 50, 73]} />
              <Lines lines={[["#f0f0f0", cciLine]]} />
            </svg>
          </ChartPanel>

          <ChartPanel
            loose
            legend={[["RSI(21,21,21)"], ["RSI1:40.9891", "#ffffff"], ["RSI2:40.9891", YELLOW], ["RSI3:40.9891", "#e800e8"]]}
            gutter={<Scale height="110" labels={[[21, "100"], [44, "80"], [80, "50"], [115, "20"], [129, "0"]]} />}
          >
            <svg height="120">
              <Grid rows={[0, 23, 59, 94, 117]} />
              <Lines lines={[["#ff00ff", rsiLine], ["#ff70a0", rsiLine, "4 4"]]} />
            </svg>
          </ChartPanel>

          <AxisRow>
            <AxisName>周线</AxisName>
            <Plot>
              <svg height="15" fill="#e8e8e8" fontSize="11">
                {dates.map(([x, text]) => (
                  <text key={x} x={x} y="11">{text}</text>
                ))}
              </svg>
            </Plot>
          </AxisRow>
        </Charts>

        <QuotePanel />
      </Body>

      <StatusBar>
        {indexes.map(([name, price, change, amount]) => (
          <IndexGroup key={name}>
            <IndexName>{name}</IndexName>
            <IndexValue>{price}</IndexValue>
            <IndexValue>{change}</IndexValue>
            <IndexValue wide>{amount}</IndexValue>
          </IndexGroup>
        ))}
        <StatusRight>
          <span>pob<em>o</em></span>
          <svg width="21" height="13" fill="none" stroke="#444444" strokeWidth="2">
            <path d="M0 1h10M5 1v11M1 2l4 4l4-4M12 9v3M15 7v5M18 4v8M20 1v11" />
          </svg>
          <time>16:04</time>
        </StatusRight>
      </StatusBar>
      <Taskbar />

      <Activate>
        <p>激活 Windows</p>
        <p>转到“设置”以激活 Windows。</p>
      </Activate>
    </Page>
  );
}
